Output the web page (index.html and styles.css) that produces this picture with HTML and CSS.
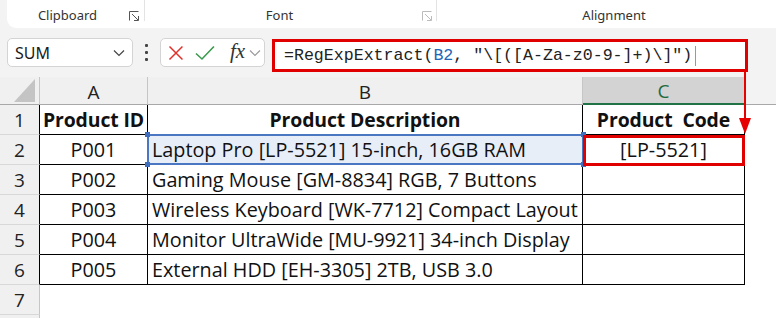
FILE: index.html
```html
<!DOCTYPE html>
<html>
<head>
    <title>RegExpExtract</title>
    <link rel="stylesheet" href="styles.css">
</head>
<body>
    <div class="app">
        <div class="ribbon">
            <div class="group clip">
                <span class="label">Clipboard</span>
                <svg class="launcher" width="10" height="10" viewBox="0 0 10 10"><path d="M0.5 9.5V0.5H9.5M3 3L9 9M5 9.5H9.5V5" fill="none" stroke="#555" stroke-width="1"/></svg>
            </div>
            <div class="group font">
                <span class="label">Font</span>
                <svg class="launcher" width="10" height="10" viewBox="0 0 10 10"><path d="M0.5 9.5V0.5H9.5M3 3L9 9M5 9.5H9.5V5" fill="none" stroke="#bbb" stroke-width="1"/></svg>
            </div>
            <div class="group align">
                <span class="label">Alignment</span>
            </div>
        </div>

        <div class="fbar">
            <div class="namebox">
                <span>SUM</span>
                <svg width="12" height="8" viewBox="0 0 12 8"><path d="M1 1.5L6 6.5L11 1.5" fill="none" stroke="#444" stroke-width="1.2"/></svg>
            </div>
            <div class="dots"><i></i><i></i><i></i></div>
            <div class="funcbox">
                <svg width="16" height="16" viewBox="0 0 16 16"><path d="M1.5 1.5L14.5 14.5M14.5 1.5L1.5 14.5" stroke="#e0302a" stroke-width="1.5"/></svg>
                <svg width="20" height="16" viewBox="0 0 20 16"><path d="M1 8.5L7 14L19 1.5" fill="none" stroke="#3a9a4c" stroke-width="1.6"/></svg>
                <span class="fx">fx</span>
                <svg width="12" height="8" viewBox="0 0 12 8"><path d="M1 1.5L6 6.5L11 1.5" fill="none" stroke="#999" stroke-width="1.1"/></svg>
            </div>
            <div class="formula">=RegExpExtract(<span class="ref">B2</span>, "\[([A-Za-z0-9-]+)\]")<span class="caret"></span></div>
        </div>

        <div class="sheet">
            <div class="corner"><span class="tri"></span></div>
            <div class="colh">A</div>
            <div class="colh">B</div>
            <div class="colh sel">C</div>
            <div class="colh last"></div>

            <div class="rowh edge">1</div>
            <div class="cell c bold">Product ID</div>
            <div class="cell c bold">Product Description</div>
            <div class="cell c bold">Product&nbsp; Code</div>
            <div class="empty"></div>

            <div class="rowh edge">2</div>
            <div class="cell c">P001</div>
            <div class="cell ref-cell">Laptop Pro [LP-5521] 15-inch, 16GB RAM
                <span class="h tl"></span><span class="h bl"></span><span class="h tr"></span><span class="h br"></span>
            </div>
            <div class="cell c result">[LP-5521]</div>
            <div class="empty"></div>

            <div class="rowh edge">3</div>
            <div class="cell c">P002</div>
            <div class="cell">Gaming Mouse [GM-8834] RGB, 7 Buttons</div>
            <div class="cell"></div>
            <div class="empty"></div>

            <div class="rowh edge">4</div>
            <div class="cell c">P003</div>
            <div class="cell">Wireless Keyboard [WK-7712] Compact Layout</div>
            <div class="cell"></div>
            <div class="empty"></div>

            <div class="rowh edge">5</div>
            <div class="cell c">P004</div>
            <div class="cell">Monitor UltraWide [MU-9921] 34-inch Display</div>
            <div class="cell"></div>
            <div class="empty"></div>

            <div class="rowh edge">6</div>
            <div class="cell c">P005</div>
            <div class="cell">External HDD [EH-3305] 2TB, USB 3.0</div>
            <div class="cell"></div>
            <div class="empty"></div>

            <div class="rowh">7</div>
            <div class="empty"></div>
            <div class="empty"></div>
            <div class="empty"></div>
            <div class="empty"></div>

            <div class="rowh"></div>
            <div class="empty"></div>
            <div class="empty"></div>
            <div class="empty"></div>
            <div class="empty"></div>
        </div>

        <svg class="arrow" width="16" height="66" viewBox="0 0 16 66"><path d="M7 0V50" stroke="#e60000" stroke-width="2"/><path d="M1 47H13L7 63Z" fill="#e60000"/></svg>
    </div>
</body>
</html>
```

FILE: styles.css
```css
body {
    margin: 0;
    background-color: #f3f3f3;
    font-family: "Noto Sans", "Open Sans", sans-serif;
    color: #1a1a1a;
    overflow: hidden;
}
.app {
    position: relative;
    width: 776px;
    height: 318px;
    overflow: hidden;
}

/* ribbon */
.ribbon {
    display: flex;
    height: 28px;
    margin-left: 7px;
    background-color: #fff;
    border-bottom-left-radius: 9px;
    overflow: hidden;
}
.group {
    position: relative;
    flex-shrink: 0;
    display: flex;
    justify-content: center;
    align-items: center;
    align-self: flex-start;
    box-sizing: border-box;
    height: 21px;
    padding-top: 9px;
}
.group .label {
    font-size: 13px;
    color: #333;
}
.clip {
    width: 138px;
    padding-right: 16px;
    border-right: 1px solid #e3e3e3;
}
.font {
    width: 292px;
    padding-right: 22px;
    border-right: 1px solid #e3e3e3;
}
.align {
    width: 354px;
}
.launcher {
    position: absolute;
    right: 5px;
    top: 11px;
}
.font .launcher {
    right: 4px;
}

/* formula bar */
.fbar {
    display: flex;
    align-items: flex-start;
    height: 44px;
    padding: 10px 0 0 7px;
    box-sizing: border-box;
}
.namebox {
    display: flex;
    align-items: center;
    justify-content: space-between;
    box-sizing: border-box;
    width: 126px;
    height: 29px;
    padding: 0 7px 0 7px;
    background-color: #fff;
    border: 1px solid #d4d4d4;
    border-radius: 5px;
    font-size: 16px;
}
.dots {
    display: flex;
    flex-direction: column;
    align-items: center;
    justify-content: center;
    gap: 4px;
    width: 27px;
    height: 29px;
}
.dots i {
    width: 3px;
    height: 3px;
    background-color: #444;
    border-radius: 1px;
}
.funcbox {
    display: flex;
    align-items: center;
    box-sizing: border-box;
    width: 105px;
    height: 29px;
    padding: 0 3px 0 7px;
    background-color: #fff;
    border: 1px solid #d4d4d4;
    border-radius: 5px;
}
.funcbox svg:nth-child(2) {
    margin-left: 11px;
}
.fx {
    margin-left: 15px;
    font-family: "Liberation Serif", serif;
    font-style: italic;
    font-size: 21px;
    line-height: 1;
    color: #333;
    margin-top: -3px;
}
.funcbox svg:last-child {
    margin-left: 4px;
}
.formula {
    display: flex;
    align-items: center;
    box-sizing: border-box;
    width: 476px;
    height: 33px;
    margin: 1px 0 0 7px;
    padding-left: 9px;
    background-color: #fff;
    border: 3px solid #e00000;
    font-family: "Liberation Mono", monospace;
    font-size: 16.6px;
    color: #222;
    white-space: pre;
}
.formula .ref {
    color: #1f66b8;
}
.caret {
    display: inline-block;
    width: 1px;
    height: 20px;
    margin-left: 3px;
    background-color: #999;
}

/* sheet */
.sheet {
    display: grid;
    grid-template-columns: 40px 108px 435px 162px 31px;
    grid-template-rows: 28px repeat(7, 30px) 10px;
    margin-top: 5px;
    background-color: #fff;
    font-family: "Open Sans", "Noto Sans", sans-serif;
}
.sheet > div {
    box-sizing: border-box;
}
.corner {
    position: relative;
    background-color: #f0f0f0;
    border-right: 1px solid #c6c6c6;
    border-bottom: 1px solid #a8a8a8;
}
.tri {
    position: absolute;
    right: 4px;
    bottom: 2px;
    width: 21px;
    height: 23px;
    background-color: #c4c4c4;
    clip-path: polygon(100% 0, 100% 100%, 0 100%);
}
.colh {
    display: flex;
    align-items: center;
    justify-content: center;
    padding-top: 2px;
    background-color: #f0f0f0;
    border-right: 1px solid #c6c6c6;
    border-bottom: 1px solid #a8a8a8;
    font-size: 19px;
    color: #222;
}
.colh.sel {
    background-color: #d3d3d3;
    color: #1e6b40;
    border-bottom: 2px solid #217346;
}
.colh.last {
    border-right: none;
    background-color: #f3f3f3;
}
.rowh {
    display: flex;
    align-items: center;
    justify-content: center;
    background-color: #f0f0f0;
    border-right: 1px solid #c6c6c6;
    border-bottom: 1px solid #d8d8d8;
    font-size: 19px;
    color: #222;
}
.rowh.edge {
    border-right-color: #000;
}
.cell {
    display: flex;
    align-items: center;
    padding: 0 4px;
    border-right: 1px solid #000;
    border-bottom: 1px solid #000;
    font-size: 19.8px;
    color: #111;
    white-space: nowrap;
}
.cell.c {
    justify-content: center;
}
.cell.bold {
    font-weight: 700;
    font-size: 19.4px;
    letter-spacing: -0.1px;
}
.empty {
    background-color: #fff;
}
.ref-cell {
    position: relative;
    background-color: #e8eef8;
}
.ref-cell::before {
    content: "";
    position: absolute;
    top: -1px;
    left: -1px;
    right: -2px;
    bottom: -1px;
    border: 2px solid #4a76c2;
}
.h {
    position: absolute;
    width: 5px;
    height: 5px;
    background-color: #3f6ebf;
}
.tl { top: -3px; left: -3px; }
.bl { bottom: -3px; left: -3px; }
.tr { top: -3px; right: -4px; }
.br { bottom: -3px; right: -4px; }
.result {
    position: relative;
}
.result::after {
    content: "";
    position: absolute;
    top: 0;
    left: 0;
    right: -1px;
    bottom: -2px;
    border: 3px solid #e00000;
}
.arrow {
    position: absolute;
    left: 738px;
    top: 71px;
}
```
